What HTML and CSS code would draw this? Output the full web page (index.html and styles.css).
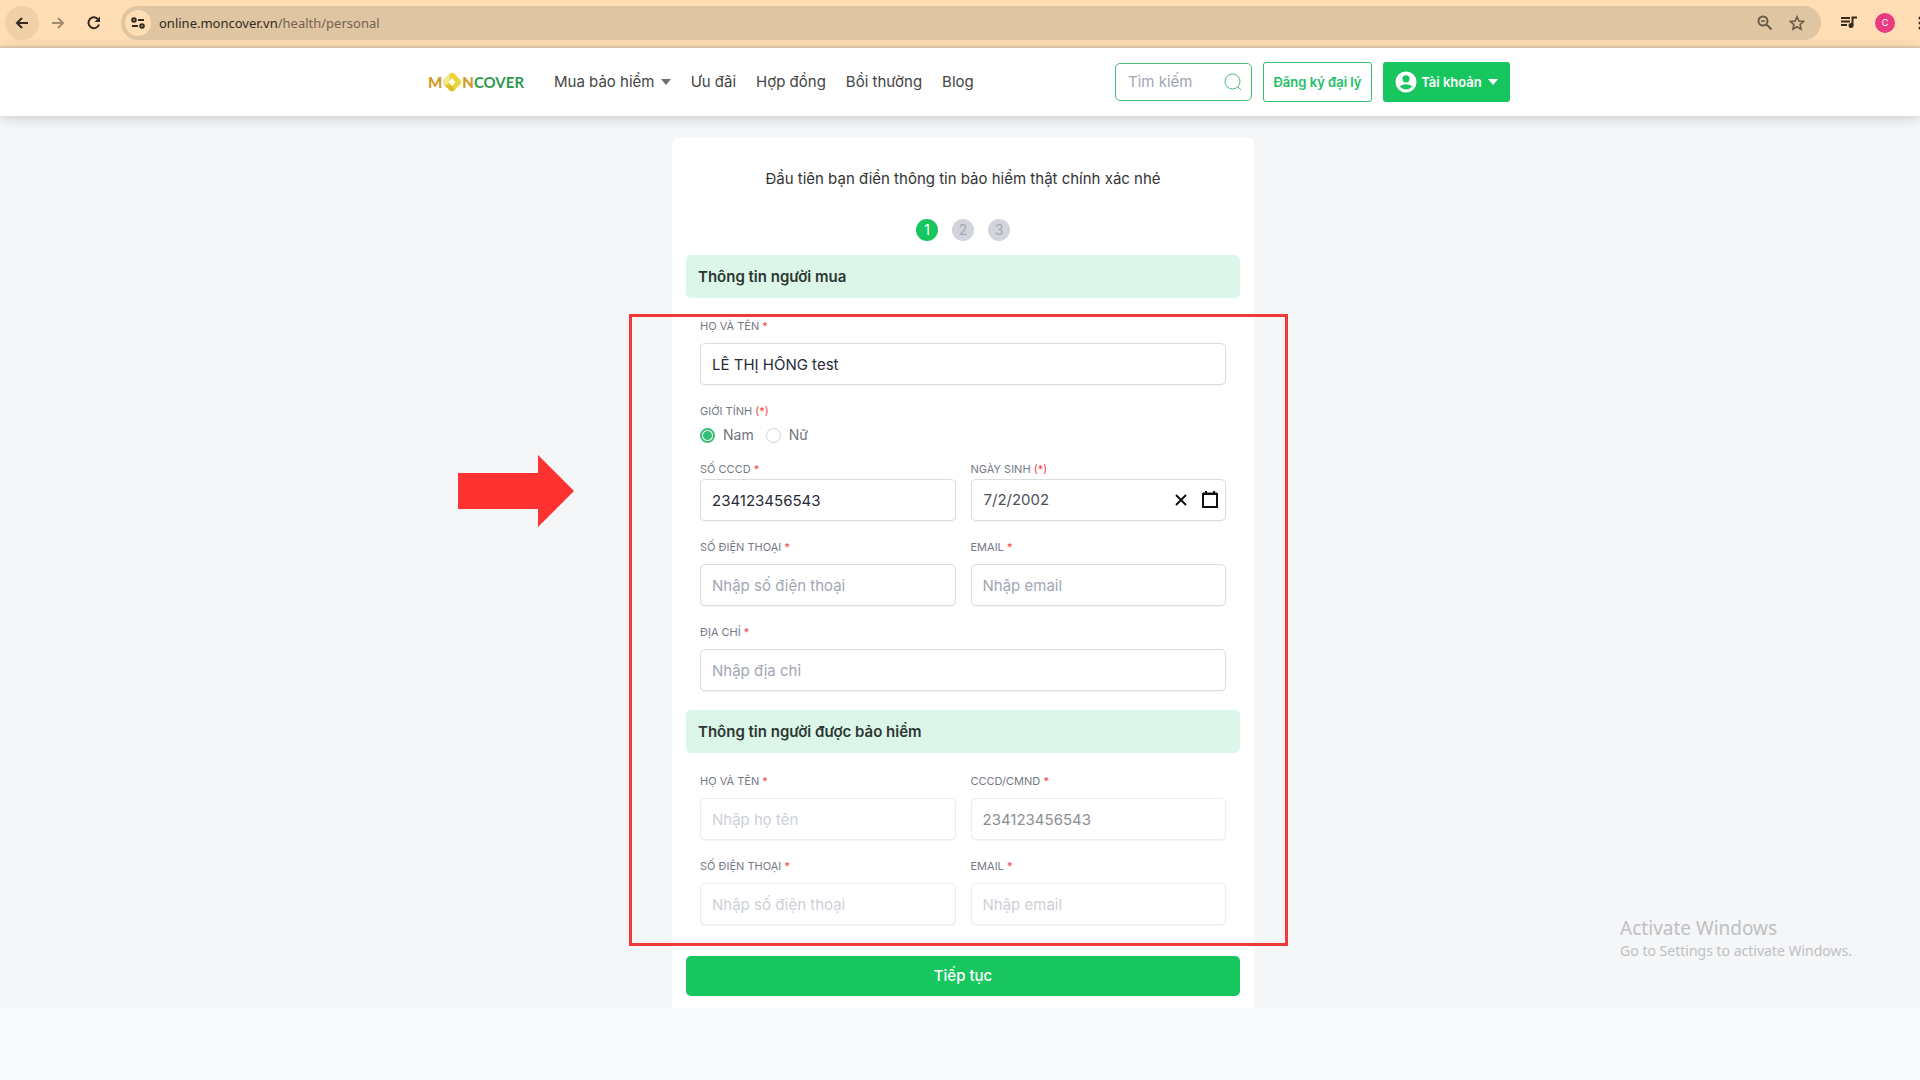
FILE: index.html
```html
<!DOCTYPE html>
<html lang="vi">
<head>
<meta charset="utf-8">
<meta name="viewport" content="width=device-width, initial-scale=1">
<title>MonCover</title>
<link rel="stylesheet" href="styles.css">
</head>
<body>
<div class="browser">
  <button class="tool back" aria-label="Back"><svg width="14" height="14" viewBox="0 0 14 14"><path d="M13 7H2M7 2 2 7l5 5" fill="none" stroke="currentColor" stroke-width="2"/></svg></button>
  <button class="tool forward" aria-label="Forward"><svg width="14" height="14" viewBox="0 0 14 14"><path d="M1 7h11M7 2l5 5-5 5" fill="none" stroke="currentColor" stroke-width="2"/></svg></button>
  <button class="tool" aria-label="Reload"><svg width="14" height="14" viewBox="0 0 14 14"><path d="M12 8.500A5.400 5.400 0 1 1 11.200 3.500" fill="none" stroke="currentColor" stroke-width="2"/><path d="M13 .5v5.500H7.500z" fill="currentColor"/></svg></button>
  <div class="address">
    <span class="site"><svg width="14" height="12" viewBox="0 0 14 12" fill="none" stroke="currentColor" stroke-width="2"><circle cx="3" cy="3" r="1.800"/><path d="M7 3h6M1 9h6"/><circle cx="11" cy="9" r="1.800"/></svg></span>
    <span class="url">online.moncover.vn<span class="path">/health/personal</span></span>
    <svg width="16" height="16" viewBox="0 0 16 16" fill="none" stroke="currentColor" stroke-width="2"><circle cx="6" cy="6" r="4.500"/><path d="m9.500 9.500 5 5"/><path d="M4 6h4" stroke-width="1.500"/></svg>
    <svg class="star" width="16" height="16" viewBox="0 0 16 16"><path d="m8 1.800 1.900 4.300 4.700.4-3.500 3.100 1 4.600L8 11.800l-4.100 2.400 1-4.600L1.400 6.500l4.700-.4z" fill="none" stroke="currentColor" stroke-width="1.600"/></svg>
  </div>
  <svg class="media" width="16" height="14" viewBox="0 0 16 14"><path d="M0 2h9M0 5.500h9M0 9h6" stroke="currentColor" stroke-width="2"/><circle cx="10" cy="9.500" r="2.500" fill="currentColor"/><path d="M11.500 9.500V1.500H16" fill="none" stroke="currentColor" stroke-width="2"/></svg>
  <span class="avatar">C</span>
  <svg class="more" width="4" height="14" viewBox="0 0 4 14" fill="currentColor"><circle cx="2" cy="2" r="1.500"/><circle cx="2" cy="7" r="1.500"/><circle cx="2" cy="12" r="1.500"/></svg>
</div>

<header class="header">
  <div class="bar">
    <a class="logo" href="#"><span>M</span><svg width="20" height="20" viewBox="0 0 20 20"><path d="M7.500 1.800Q10-.5 12.500 1.800L18 7.500Q20 10 18 12.500L12.500 18.200Q10 20.500 7.500 18.200L2 12.500Q0 10 2 7.500z" fill="#ecd43c"/><path d="M2 7.500 7.500 1.800 8 8l-3 5-3-.5Q0 10 2 7.500z" fill="#f5e88c"/><path d="M2 12.500 10 14l2.500 4.200Q10 20.500 7.500 18.200z" fill="#dfbd22"/><path d="m10 6 3.500 4-3.500 4-3.500-4z" fill="#fffdf0"/></svg><span>N</span><span class="cover">COVER</span></a>
    <nav class="nav">
      <a href="#">Mua bảo hiểm <i class="caret"></i></a>
      <a href="#">Ưu đãi</a>
      <a href="#">Hợp đồng</a>
      <a href="#">Bồi thường</a>
      <a href="#">Blog</a>
    </nav>
    <label class="search"><input type="text" placeholder="Tìm kiếm" aria-label="Tìm kiếm"><svg width="18" height="18" viewBox="0 0 18 18" fill="none" stroke="currentColor"><circle cx="8.500" cy="8.500" r="7.500"/><path d="m14 14 3 3"/></svg></label>
    <button class="agent">Đăng ký đại lý</button>
    <button class="account"><svg width="22" height="22" viewBox="0 0 22 22"><circle cx="11" cy="11" r="10.500" fill="#fff"/><circle cx="11" cy="7.800" r="3.600" fill="#18c660"/><path d="M4.500 15.500q6.500-4.500 13 0-6.500 6-13 0z" fill="#18c660"/></svg>Tài khoản <i class="caret"></i></button>
  </div>
</header>

<main class="main">
  <form class="card">
    <p class="intro">Đầu tiên bạn điền thông tin bảo hiểm thật chính xác nhé</p>
    <ol class="steps"><li class="current">1</li><li>2</li><li>3</li></ol>
    <h2 class="section">Thông tin người mua</h2>
    <div class="fields">
      <div class="field wide"><label for="name">HỌ VÀ TÊN <b>*</b></label><input class="box" id="name" type="text" value="LÊ THỊ HỒNG test"></div>
      <fieldset class="gender wide">
        <legend>GIỚI TÍNH <b>(*)</b></legend>
        <label><input type="radio" name="gender" checked>Nam</label>
        <label><input type="radio" name="gender">Nữ</label>
      </fieldset>
      <div class="field tight"><label for="cccd">SỐ CCCD <b>*</b></label><input class="box" id="cccd" type="text" value="234123456543"></div>
      <div class="field tight"><label for="birth">NGÀY SINH <b>(*)</b></label>
        <div class="box date"><input id="birth" type="text" value="7/2/2002">
          <button type="button" aria-label="Xóa ngày"><svg width="12" height="12" viewBox="0 0 12 12"><path d="m1 1 10 10M11 1 1 11" stroke="#111" stroke-width="2"/></svg></button>
          <button type="button" aria-label="Chọn ngày"><svg width="16" height="18" viewBox="0 0 16 18"><path d="M1 3h14v13H1zM1 2.500h14" fill="none" stroke="#111" stroke-width="2"/><path d="M3 0h2v2H3zm8 0h2v2h-2z" fill="#111"/></svg></button>
        </div></div>
      <div class="field"><label for="phone">SỐ ĐIỆN THOẠI <b>*</b></label><input class="box" id="phone" type="text" placeholder="Nhập số điện thoại"></div>
      <div class="field"><label for="email">EMAIL <b>*</b></label><input class="box" id="email" type="text" placeholder="Nhập email"></div>
      <div class="field wide"><label for="address">ĐỊA CHỈ <b>*</b></label><input class="box" id="address" type="text" placeholder="Nhập địa chỉ"></div>
    </div>
    <h2 class="section">Thông tin người được bảo hiểm</h2>
    <div class="fields insured">
      <div class="field"><label for="name2">HỌ VÀ TÊN <b>*</b></label><input class="box" id="name2" type="text" placeholder="Nhập họ tên" disabled></div>
      <div class="field"><label for="cccd2">CCCD/CMND <b>*</b></label><input class="box" id="cccd2" type="text" value="234123456543" disabled></div>
      <div class="field"><label for="phone2">SỐ ĐIỆN THOẠI <b>*</b></label><input class="box" id="phone2" type="text" placeholder="Nhập số điện thoại" disabled></div>
      <div class="field"><label for="email2">EMAIL <b>*</b></label><input class="box" id="email2" type="text" placeholder="Nhập email" disabled></div>
    </div>
    <button class="submit" type="submit">Tiếp tục</button>
    <div class="highlight"></div>
    <svg class="arrow" width="116" height="72" viewBox="0 0 116 72"><path d="M0 18h80V0l36 36-36 36V54H0z" fill="#ff3131"/></svg>
  </form>
  <aside class="watermark"><p class="title">Activate Windows</p><p>Go to Settings to activate Windows.</p></aside>
</main>
</body>
</html>
```
FILE: styles.css
```css
* { box-sizing: border-box; }
body { margin: 0; background: #f7f9fb; color: #333; font: 15px/20px Inter, "Noto Sans", sans-serif; overflow-x: hidden; }
p, h2, ol, fieldset { margin: 0; padding: 0; border: 0; }
a { color: inherit; text-decoration: none; }
button, input { font: inherit; color: inherit; }
button { padding: 0; border: 0; background: none; cursor: pointer; }
svg { display: block; flex: none; }

.browser { display: flex; align-items: center; height: 48px; padding: 0 0 0 5px; background: #ffdeb5; border-bottom: 2px solid #e8cdb0; color: #33291f; }
.tool { display: grid; place-items: center; width: 34px; height: 34px; margin-right: 2px; border-radius: 50%; }
.back { background: #efd0a9; }
.forward { color: #a38c72; }
.address { display: flex; flex: 1; align-items: center; height: 34px; margin-left: 8px; padding: 0 16px 0 4px; border-radius: 17px; background: #dfc5a1; color: #6b5b48; }
.site { display: grid; place-items: center; width: 26px; height: 26px; margin-right: 8px; border-radius: 50%; background: #ffdeb5; color: #33291f; }
.url { flex: 1; font: 13px/20px "Noto Sans", sans-serif; color: #33291f; }
.path { color: #75634e; }
.star { margin-left: 16px; }
.media { margin-left: 20px; }
.avatar { width: 20px; height: 20px; margin-left: 18px; border-radius: 50%; background: #e93b80; color: #fff; font-size: 9px; text-align: center; }
.more { margin: 0 -2px 0 23px; }

.header { position: relative; z-index: 1; height: 68px; padding: 0 8px 0 26px; background: #fff; box-shadow: 0 2px 12px rgb(0 0 0 / 18%); }
.bar { display: flex; align-items: center; max-width: 1082px; height: 100%; margin: 0 auto; }
.logo { display: flex; align-items: center; width: 126px; color: #cf9a25; font: 900 15px/20px Lato, sans-serif; }
.cover { color: #2c9a4b; font-weight: 700; }
.nav { display: flex; flex: 1; gap: 20px; color: #444; white-space: nowrap; }
.caret { display: inline-block; margin-left: 2px; border: 5px solid transparent; border-top: 6px solid currentColor; border-bottom: 0; vertical-align: 2px; }
.nav .caret { color: #6b7078; }
.search { display: flex; align-items: center; width: 137px; height: 38px; padding: 0 9px 0 12px; border: 1px solid #48bd78; border-radius: 5px; color: #48bd78; }
.search input { flex: 1; min-width: 0; padding: 0; border: 0; outline: 0; background: none; }
::placeholder { color: #a2a6b4; opacity: 1; }
.agent, .account { height: 40px; margin-left: 11px; border-radius: 3px; font-size: 13px; font-weight: 600; }
.agent { width: 109px; border: 1px solid #35bf6d; color: #22c065; }
.account { display: flex; align-items: center; justify-content: center; gap: 4px; width: 127px; background: #18c660; color: #fff; }

.main { position: relative; padding: 22px 0 0 6px; background: #f4f6f8; }
.card { position: relative; max-width: 582px; margin: 0 auto; padding: 30px 14px 12px; border-radius: 5px 5px 0 0; background: #fff; }
.intro { text-align: center; line-height: 22px; }
.steps { display: flex; justify-content: center; gap: 14px; margin: 29px 0 14px; list-style: none; font-size: 14px; line-height: 22px; text-align: center; }
.steps li { width: 22px; height: 22px; border-radius: 50%; background: #d1d4db; color: #a6a9b3; }
.steps .current { background: #18c660; color: #fff; }
.section { height: 43px; padding: 0 12px; border-radius: 5px; background: #dcf6ea; color: #2c3733; font-size: 15px; font-weight: 600; line-height: 43px; }
.fields { display: grid; grid-template-columns: repeat(2, minmax(0, 1fr)); gap: 18px 15px; padding: 20px 14px 19px; }
.wide { grid-column: 1 / -1; }
.field { display: flex; flex-direction: column; gap: 9px; }
.tight { gap: 2px; }
.field > label, legend { padding: 0; color: #757a84; font-size: 11px; line-height: 16px; }
.field b, legend b { color: #f04545; font-weight: 400; }
.box { width: 100%; height: 42px; padding: 0 11px; border: 1px solid #dadce0; border-radius: 5px; outline: 0; background: #fff; color: #262b38; box-shadow: 0 1px 1px rgb(0 0 0 / 5%); }
.date { display: flex; align-items: center; gap: 15px; padding: 0 7px 0 12px; }
.date input { flex: 1; min-width: 0; padding: 0; border: 0; outline: 0; color: #4c4f57; }
.gender { display: flex; gap: 12px; height: 40px; color: #70747c; font-size: 14px; }
legend { margin-bottom: 6px; }
.gender label { display: flex; align-items: center; height: 20px; gap: 8px; }
.gender input { appearance: none; width: 15px; height: 15px; margin: 0; border: 1px solid #cfd2d6; border-radius: 50%; }
.gender input:checked { border: 2px solid #35bf74; background: radial-gradient(circle, #35bf74 0 4px, #fff 5px); }
.insured { padding-bottom: 31px; }
.box:disabled { border-color: #ecedf0; color: #8b8d92; opacity: 1; }
.box:disabled::placeholder { color: #cdd0d8; }
.submit { display: block; width: 100%; height: 40px; border-radius: 5px; background: #18c660; color: #fff; font-weight: 500; }
.highlight { position: absolute; inset: 176px -34px 62px -43px; border: 3px solid #f03a3a; pointer-events: none; }
.arrow { position: absolute; top: 317px; left: -214px; }
.watermark { position: absolute; right: 68px; bottom: 46px; color: #bfc0c2; font: 14px/22px "Noto Sans", sans-serif; }
.watermark .title { font-size: 19px; line-height: 24px; }
```
